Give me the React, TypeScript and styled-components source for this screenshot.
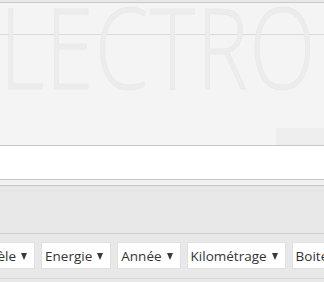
import React from "react";
import styled, { createGlobalStyle } from "styled-components";

const Global = createGlobalStyle`
  html, body { margin: 0; padding: 0; background: #e8e8e8; }
  body { width: 324px; height: 282px; overflow: hidden; font-family: "Open Sans", "Liberation Sans", sans-serif; }
`;

const Page = styled.div`
  width: 324px;
  height: 282px;
  overflow: hidden;
  display: flex;
  flex-direction: column;
  background: #e8e8e8;
`;

const Hero = styled.div`
  position: relative;
  height: 142px;
  margin-top: 2px;
  border-top: 1px solid #c9c9c9;
  border-bottom: 1px solid #c6c6c6;
  background: #f4f4f4;
  overflow: hidden;
`;

const HeroBar = styled.div`
  height: 31px;
  border-bottom: 1px solid #dadada;
`;

const Watermark = styled.div`
  position: absolute;
  left: 0px;
  top: -13px;
  font-family: "Open Sans", sans-serif;
  font-weight: 300;
  font-size: 112px;
  letter-spacing: 2px;
  color: #ececec;
  line-height: 1;
  white-space: nowrap;
  transform: scaleX(0.77);
  transform-origin: left top;
  -webkit-text-stroke: 0.4px #e5e5e5;
`;

const Corner = styled.div`
  position: absolute;
  right: 0;
  bottom: 0;
  width: 48px;
  height: 17px;
  background: #eeeeee;
`;

const SearchField = styled.div`
  height: 33px;
  background: #ffffff;
  border-bottom: 1px solid #c6c6c6;
`;

const Gap = styled.div`
  height: 5px;
  background: #f1f1f1;
  border-bottom: 1px solid #c8c8c8;
`;

const Band = styled.div`
  height: 47px;
  background: linear-gradient(#e2e2e2 0px, #ebebeb 2px, #e4e4e4 4px, #e8e8e8 6px, #e8e8e8 100%);
  border-bottom: 1px solid #d0d0d0;
`;

const FilterRow = styled.div`
  display: flex;
  gap: 6px;
  padding-top: 8px;
  margin-left: -35px;
  height: 36px;
  border-bottom: 1px solid #d6d6d6;
  white-space: nowrap;
`;

const Filter = styled.div`
  flex: none;
  height: 25px;
  display: flex;
  align-items: center;
  gap: 5px;
  padding: 0 7px 0 3px;
  background: #ffffff;
  border: 1px solid #e0e0e0;
  font-size: 13.5px;
  color: #333333;
`;

const Arrow = styled.span`
  width: 0;
  height: 0;
  border-left: 3.5px solid transparent;
  border-right: 3.5px solid transparent;
  border-top: 7px solid #3a3a3a;
  margin-top: 1px;
`;

const filters = ["Modèle", "Energie", "Année", "Kilométrage", "Boite de vitesse"];

export default function App() {
  return (
    <Page>
      <Global />
      <Hero>
        <HeroBar />
        <Watermark>LECTRO</Watermark>
        <Corner />
      </Hero>
      <SearchField />
      <Gap />
      <Band />
      <FilterRow>
        {filters.map((f) => (
          <Filter key={f}>
            {f}
            <Arrow />
          </Filter>
        ))}
      </FilterRow>
    </Page>
  );
}
